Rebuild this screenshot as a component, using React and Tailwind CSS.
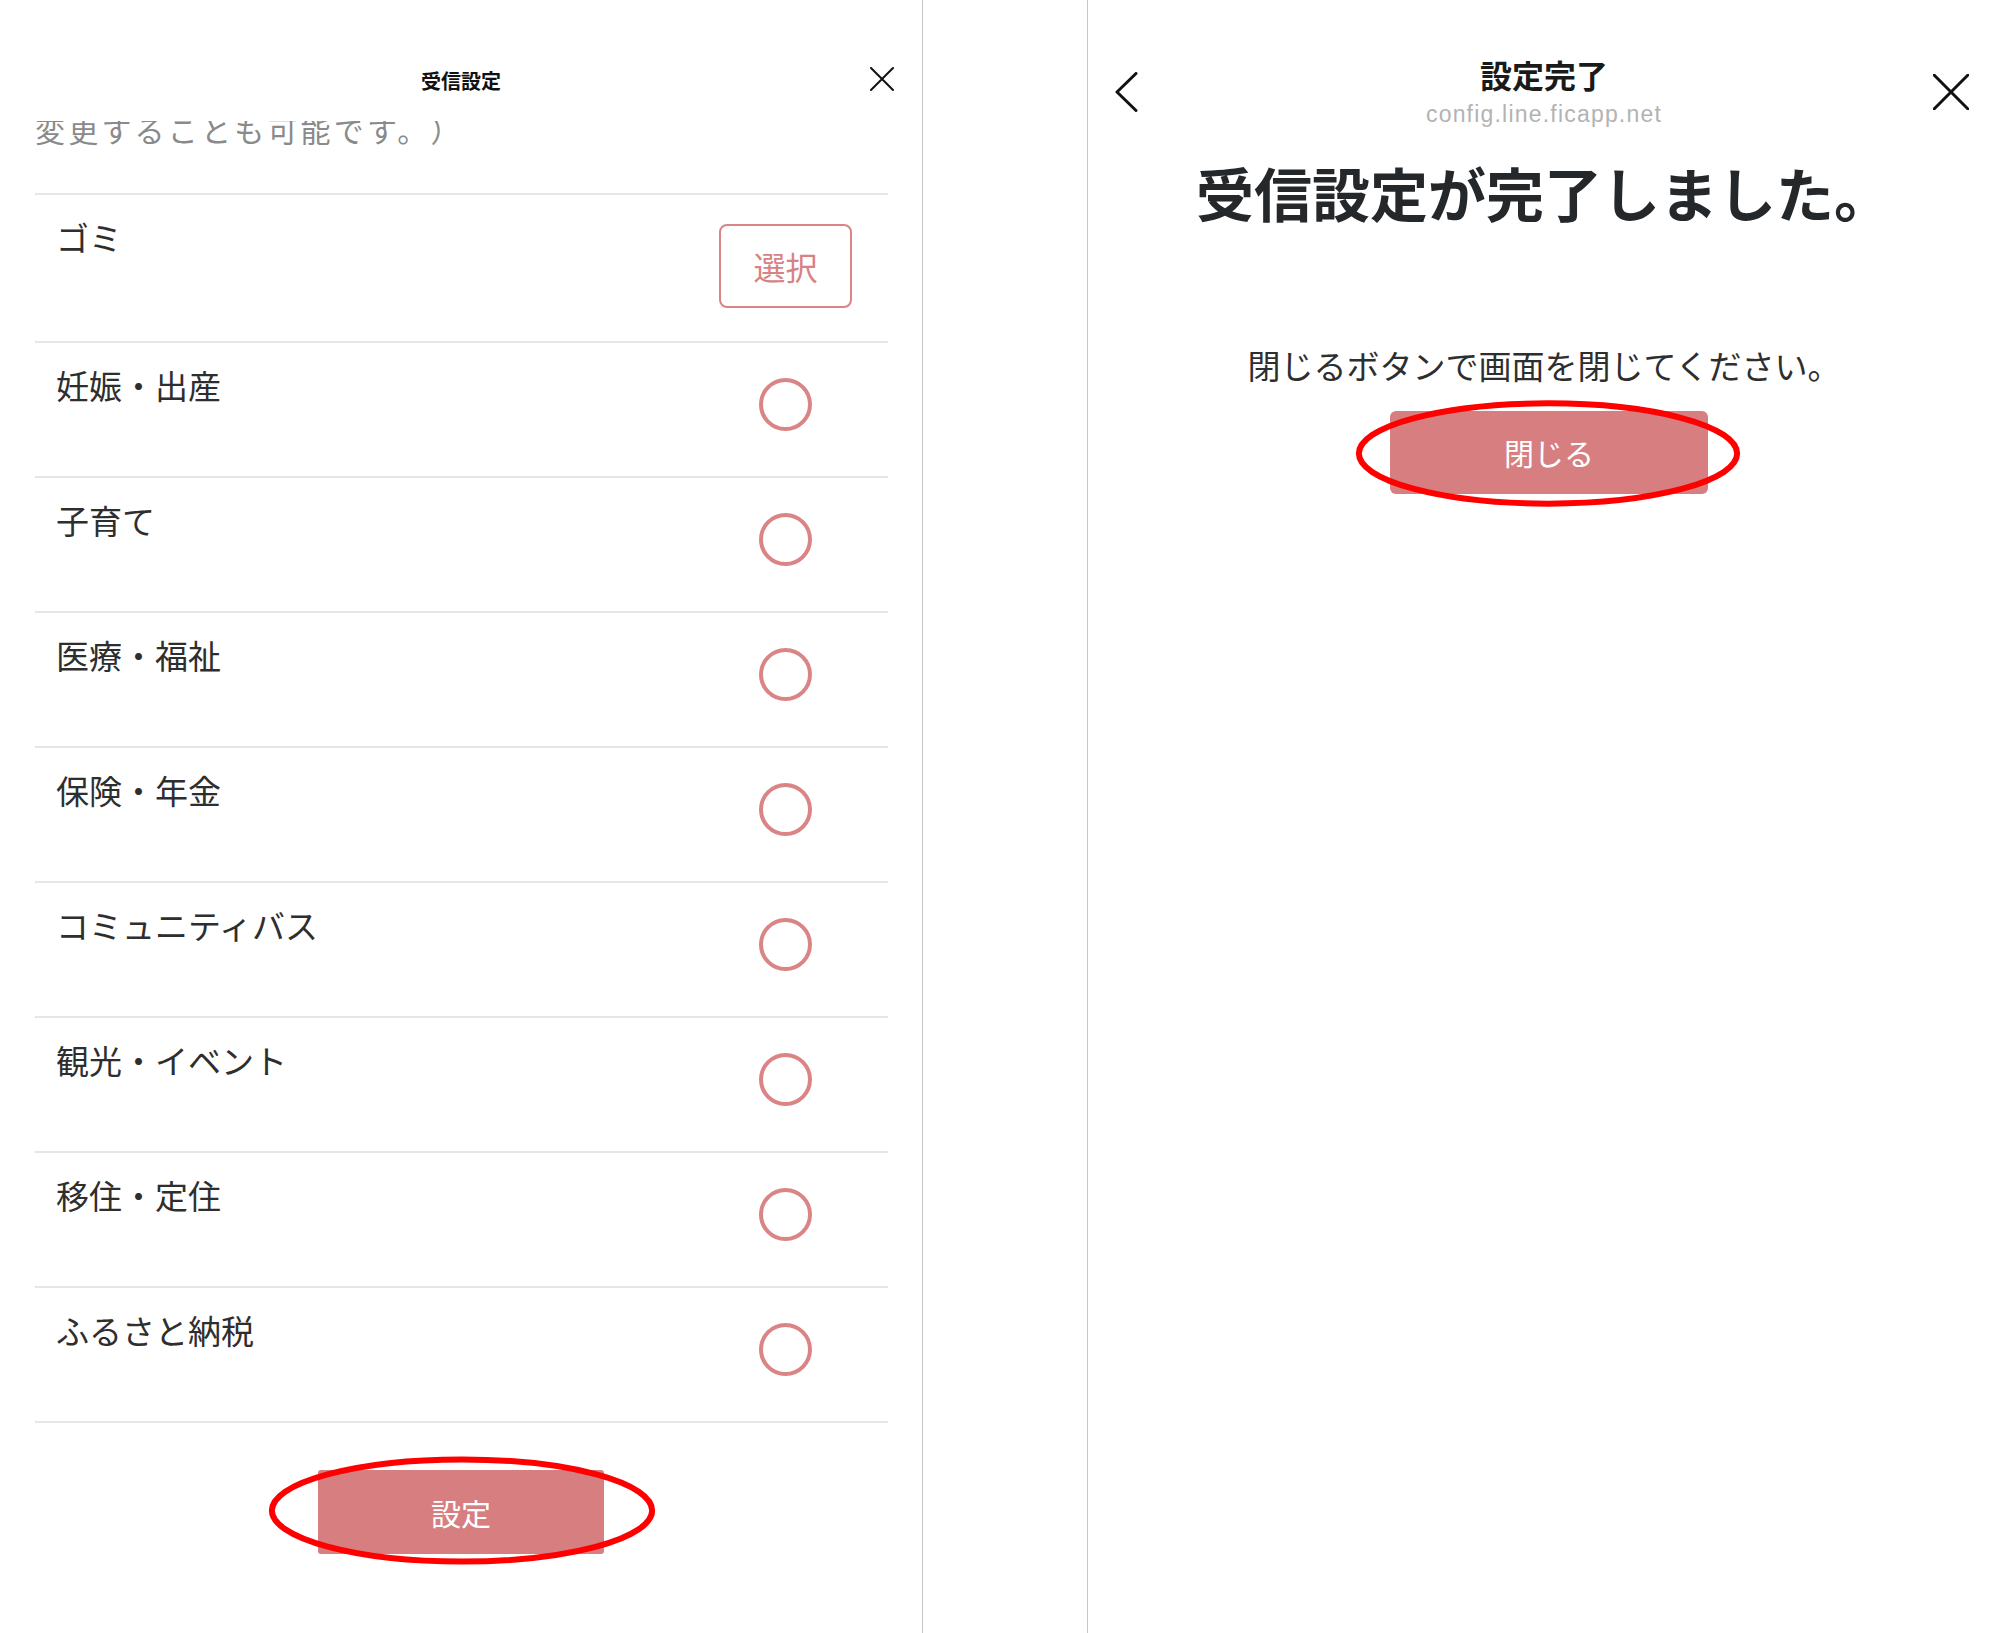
import React from 'react';

const categories = [
  'ゴミ',
  '妊娠・出産',
  '子育て',
  '医療・福祉',
  '保険・年金',
  'コミュニティバス',
  '観光・イベント',
  '移住・定住',
  'ふるさと納税',
];

const CloseIcon = ({ className, size = 24, stroke = 2 }) => (
  <svg className={className} width={size} height={size} viewBox={`0 0 ${size} ${size}`} fill="none">
    <path d={`M1 1L${size - 1} ${size - 1}M${size - 1} 1L1 ${size - 1}`} stroke="#111" strokeWidth={stroke} strokeLinecap="round" />
  </svg>
);

const RedRing = () => (
  <svg className="absolute inset-0 w-full h-full overflow-visible" preserveAspectRatio="none" viewBox="0 0 100 100">
    <ellipse cx="50" cy="50" rx="49" ry="46" fill="none" stroke="#ff0000" strokeWidth="6" vectorEffect="non-scaling-stroke" />
  </svg>
);

const CategoryRow = ({ label, first }) => (
  <div className={`flex justify-between border-t-2 border-[#e6e6e6] ${first ? 'h-[148px]' : 'h-[135px]'}`}>
    <span className="pl-[21px] pt-[18px] text-[33px] leading-[48px] text-[#2e2e2e]">{label}</span>
    <div className="w-[133px] mr-[36px] flex justify-center">
      {first ? (
        <button className="mt-[29px] w-[133px] h-[84px] rounded-[8px] border-2 border-[#db8486] text-[#d98283] text-[32px] bg-white">
          選択
        </button>
      ) : (
        <div className="mt-[35px] w-[53px] h-[53px] rounded-full border-[4px] border-[#db8486]" />
      )}
    </div>
  </div>
);

const SettingsPanel = () => (
  <div className="w-[923px] h-full border-r border-[#c6c6c6] flex flex-col">
    <div className="h-[121px] pt-[67px] grid grid-cols-[1fr_auto_1fr] items-start">
      <div />
      <h1 className="text-[20px] leading-[28px] font-bold text-[#111]">受信設定</h1>
      <div className="flex justify-end pr-[28px]">
        <CloseIcon size={24} stroke={2} />
      </div>
    </div>
    <div className="h-[40px] overflow-hidden px-[35px]">
      <p className="-mt-[12px] text-[30px] leading-[40px] tracking-[3.2px] text-[#8a8a8a] whitespace-nowrap">変更することも可能です。）</p>
    </div>
    <div className="mt-[32px] ml-[35px] mr-[34px] border-b-2 border-[#e6e6e6]">
      {categories.map((c, i) => (
        <CategoryRow key={c} label={c} first={i === 0} />
      ))}
    </div>
    <div className="mt-[47px] flex justify-center">
      <div className="relative">
        <button className="w-[286px] h-[84px] rounded-[3px] bg-[#d77f80] text-white text-[30px]">設定</button>
        <div className="absolute -left-[50px] -right-[52px] -top-[15px] -bottom-[12px] pointer-events-none">
          <RedRing />
        </div>
      </div>
    </div>
  </div>
);

const DonePanel = () => (
  <div className="flex-1 h-full flex flex-col">
    <div className="pt-[55px] grid grid-cols-[1fr_auto_1fr] items-center">
      <div className="pl-[26px]">
        <svg width="24" height="40" viewBox="0 0 24 40" fill="none">
          <polyline points="22,1.5 3,20 22,38.5" stroke="#111" strokeWidth="3" strokeLinecap="round" strokeLinejoin="round" />
        </svg>
      </div>
      <div className="flex flex-col items-center">
        <h2 className="text-[32px] leading-[38px] font-bold text-[#1a1a1a]">設定完了</h2>
        <span className="mt-[7px] text-[23px] leading-[28px] tracking-[1.2px] text-[#b3b3b3] font-['Liberation_Sans',sans-serif]">
          config.line.ficapp.net
        </span>
      </div>
      <div className="flex justify-end pr-[31px]">
        <CloseIcon size={36} stroke={3} />
      </div>
    </div>
    <h3 className="mt-[31px] text-center text-[58px] leading-[66px] font-bold text-[#25282b]">受信設定が完了しました。</h3>
    <p className="mt-[118px] text-center text-[33px] leading-[44px] text-[#2e2e2e]">閉じるボタンで画面を閉じてください。</p>
    <div className="mt-[24px] flex justify-center">
      <div className="relative ml-[10px]">
        <button className="w-[318px] h-[83px] rounded-[6px] bg-[#d77f80] text-white text-[30px]">閉じる</button>
        <div className="absolute -left-[35px] -right-[33px] -top-[12px] -bottom-[14px] pointer-events-none">
          <RedRing />
        </div>
      </div>
    </div>
  </div>
);

export default function App() {
  return (
    <div className="w-[2000px] h-[1633px] overflow-hidden bg-white flex [text-spacing-trim:space-all] font-['Noto_Sans_CJK_JP','Noto_Sans',sans-serif]">
      <SettingsPanel />
      <div className="w-[165px] h-full border-r border-[#c6c6c6]" />
      <DonePanel />
    </div>
  );
}
